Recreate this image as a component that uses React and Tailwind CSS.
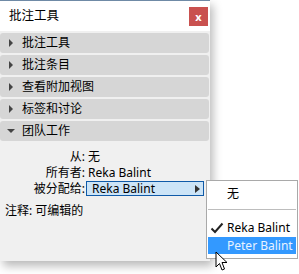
import React from 'react';

const font = { fontFamily: '"Noto Sans", "Noto Sans CJK SC", sans-serif' };

const sections = [
  { label: '批注工具', open: false },
  { label: '批注条目', open: false },
  { label: '查看附加视图', open: false },
  { label: '标签和讨论', open: false },
  { label: '团队工作', open: true },
];

function Arrow({ open }) {
  return open ? (
    <svg width="8" height="8" viewBox="0 0 8 8" className="shrink-0">
      <path d="M0 2 L8 2 L4 6 Z" fill="#444" />
    </svg>
  ) : (
    <svg width="8" height="8" viewBox="0 0 8 8" className="shrink-0">
      <path d="M2 0 L6 4 L2 8 Z" fill="#444" />
    </svg>
  );
}

export default function App() {
  return (
    <div className="relative w-[299px] h-[274px] bg-white overflow-hidden text-[12px] text-black" style={font}>
      {/* panel */}
      <div className="w-[210px] h-[261px] bg-[#f0f0f0] border-t border-[#6f8aa6] shadow-[3px_5px_9px_rgba(0,0,0,0.28)] flex flex-col">
        <div className="h-[30px] bg-white flex items-center justify-between pl-[9px] pr-[2px]">
          <span className="text-[12.5px] leading-none">批注工具</span>
          <div className="w-[19px] h-[19px] bg-[#c9514f] flex items-center justify-center text-white text-[11px] font-bold leading-none">x</div>
        </div>

        <div className="flex flex-col gap-[2px] pt-[2px] pr-[1px]">
          {sections.map((s) => (
            <div key={s.label} className="h-[20px] bg-[#d6d6d6] rounded-[3px] flex items-center gap-[7px] pl-[7px]">
              <Arrow open={s.open} />
              <span className="leading-none">{s.label}</span>
            </div>
          ))}
        </div>

        <div className="flex flex-col pt-[8px]">
          <div className="grid grid-cols-[85px_1fr] gap-y-[1px] leading-[15px]">
            <span className="text-right">从:</span>
            <span className="pl-[3px]">无</span>
            <span className="text-right">所有者:</span>
            <span className="pl-[3px]">Reka Balint</span>
            <span className="text-right">被分配给:</span>
            <div className="pl-[1px]">
              <div className="w-[118px] h-[15px] bg-[#cce4f7] border border-[#0f5aa8] flex items-center justify-between pl-[5px] pr-[3px]">
                <span className="leading-none">Reka Balint</span>
                <svg width="5" height="8" viewBox="0 0 5 8">
                  <path d="M0 0 L5 4 L0 8 Z" fill="#333" />
                </svg>
              </div>
            </div>
          </div>
          <div className="pl-[5px] pt-[7px] leading-[15px]">注释: 可编辑的</div>
        </div>
      </div>

      {/* dropdown menu */}
      <div className="absolute left-[206px] top-[180px] w-[92px] h-[79px] bg-white border border-[#a9a9a9] flex flex-col">
        <div className="h-[25px] flex items-center pl-[20px]">无</div>
        <div className="h-px bg-[#bdbdbd] mx-[1px] my-[3px]" />
        <div className="h-[22px] flex items-center pt-[8px]">
          <svg width="14" height="12" viewBox="0 0 14 12" className="ml-[3px] mr-[3px]">
            <path d="M1.5 6.5 L5 10 L12.5 1.5" stroke="#222" strokeWidth="2" fill="none" />
          </svg>
          <span>Reka Balint</span>
        </div>
        <div className="h-[17px] mt-[2px] mx-[1px] bg-[#3399ff] text-[#e8f3ff] flex items-center pl-[19px]">Peter Balint</div>
      </div>

      {/* cursor */}
      <svg className="absolute left-[215px] top-[251px]" width="13" height="21" viewBox="0 0 13 21">
        <path d="M1 1 L1 16 L4.5 12.5 L7 19 L9.5 18 L7 11.5 L12 11.5 Z" fill="white" stroke="black" strokeWidth="1" strokeLinejoin="miter" />
      </svg>
    </div>
  );
}
